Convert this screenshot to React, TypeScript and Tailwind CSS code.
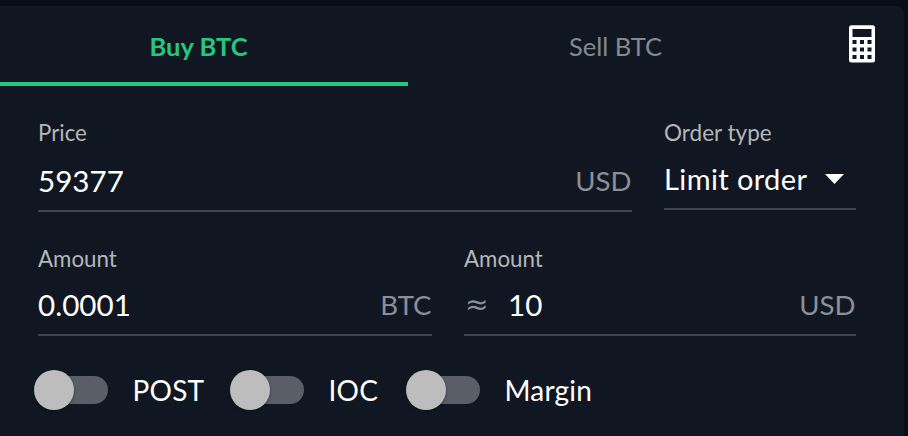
import { useState } from 'react'

type FieldProps = {
  label: string
  value: string
  unit: string
  prefix?: string
  className?: string
  rowClassName: string
  onChange: (value: string) => void
}

function Field({ label, value, unit, prefix, className = '', rowClassName, onChange }: FieldProps) {
  return (
    <label className={`block ${className}`}>
      <span className="block h-[26px] text-[22.3px] leading-[26px] text-[#b5b6b9]">{label}</span>
      <span className={`flex items-center border-b-2 border-[#40434c] ${rowClassName}`}>
        {prefix && (
          <span className="w-[44px] pl-px font-['DejaVu_Sans',sans-serif] text-[28px] leading-[36px] text-[#8c8f94]">{prefix}</span>
        )}
        <input
          value={value}
          onChange={(e) => onChange(e.target.value)}
          className="h-[36px] w-0 min-w-0 flex-1 bg-transparent text-[29.6px] leading-[36px] text-white outline-none"
        />
        <span className="pr-[0.5px] text-[27.6px] leading-[36px] text-[#8c8f94]">{unit}</span>
      </span>
    </label>
  )
}

function Toggle({ label, className = '' }: { label: string; className?: string }) {
  const [on, setOn] = useState(false)

  return (
    <button type="button" onClick={() => setOn(!on)} className={`flex items-center ${className}`}>
      <span className="flex h-10 w-[74px] items-center">
        <span className={`h-10 w-10 shrink-0 rounded-full bg-[#bdbdbd] shadow-[0_1px_3px_rgba(0,0,0,0.4)] relative z-10 ${on ? 'order-2' : ''}`} />
        <span className={`h-7 w-[70px] shrink-0 bg-[#5a5e67] rounded-full ${on ? '-mr-9' : '-ml-9'}`} />
      </span>
      <span className="ml-[24.5px] text-[28px] leading-[36px] tracking-[0.2px] text-white">{label}</span>
    </button>
  )
}

function CalculatorIcon() {
  return (
    <svg width="26" height="38" viewBox="0 0 26 38" className="block">
      <rect y="0.3" width="26" height="37.2" rx="2.5" fill="#fff" />
      <rect x="3.5" y="4" width="19" height="8" fill="#111722" />
      {[15, 22.5, 30].map((y) =>
        [3.5, 11, 18.5].map((x) => (
          <rect key={`${x}-${y}`} x={x} y={y} width="4" height="4" fill="#111722" />
        ))
      )}
    </svg>
  )
}

export default function App() {
  const [side, setSide] = useState('buy')
  const [price, setPrice] = useState('59377')
  const [amount, setAmount] = useState('0.0001')
  const [total, setTotal] = useState('10')

  return (
    <div className="h-[436px] w-[908px] overflow-hidden bg-[#090d15] pt-1.5 pr-1 font-['Lato',sans-serif]">
      <main className="h-[430px] rounded-tr-lg bg-[#111722]">
        {/* Tabs */}
        <div className="flex h-20 text-[25.5px] leading-[32px]">
          <button
            type="button"
            onClick={() => setSide('buy')}
            className={`w-[408px] border-b-4 pt-[3px] pr-[11px] ${side === 'buy' ? 'border-[#25c77e] font-bold text-[#25c77e]' : 'border-transparent text-[#85888d]'}`}
          >
            Buy BTC
          </button>
          <button
            type="button"
            onClick={() => setSide('sell')}
            className={`w-[415px] border-b-4 pt-[3px] ${side === 'sell' ? 'border-[#25c77e] font-bold text-[#25c77e]' : 'border-transparent text-[#85888d]'}`}
          >
            Sell BTC
          </button>
          <button type="button" aria-label="Calculator" className="mt-[19px] ml-[26px] self-start">
            <CalculatorIcon />
          </button>
        </div>

        <div className="flex gap-8 pt-[34px] pl-[38px]">
          <Field label="Price" value={price} unit="USD" className="w-[594px]" rowClassName="h-[66px] pt-[5px]" onChange={setPrice} />
          <div className="w-[192px]">
            <div className="h-[26px] text-[22.5px] leading-[26px] text-[#b5b6b9]">Order type</div>
            <button type="button" className="flex h-16 w-full items-center border-b-2 border-[#40434c] pt-[3px] pr-3 text-white">
              <span className="whitespace-nowrap text-[29px] leading-[36px] tracking-[0.4px]">Limit order</span>
              <svg width="19" height="10" viewBox="0 0 19 10" className="ml-auto">
                <path d="M0 0h19L9.5 10z" fill="currentColor" />
              </svg>
            </button>
          </div>
        </div>

        <div className="flex gap-8 pt-[34px] pl-[38px]">
          <Field label="Amount" value={amount} unit="BTC" className="w-[394px]" rowClassName="h-16 pt-[3px]" onChange={setAmount} />
          <Field label="Amount" value={total} unit="USD" prefix="≈" className="w-[392px]" rowClassName="h-16 pt-[3px]" onChange={setTotal} />
        </div>

        {/* Order options */}
        <div className="flex pt-[34px] pl-[34px]">
          <Toggle label="POST" className="w-[196px]" />
          <Toggle label="IOC" className="w-[176px]" />
          <Toggle label="Margin" />
        </div>
      </main>
    </div>
  )
}
